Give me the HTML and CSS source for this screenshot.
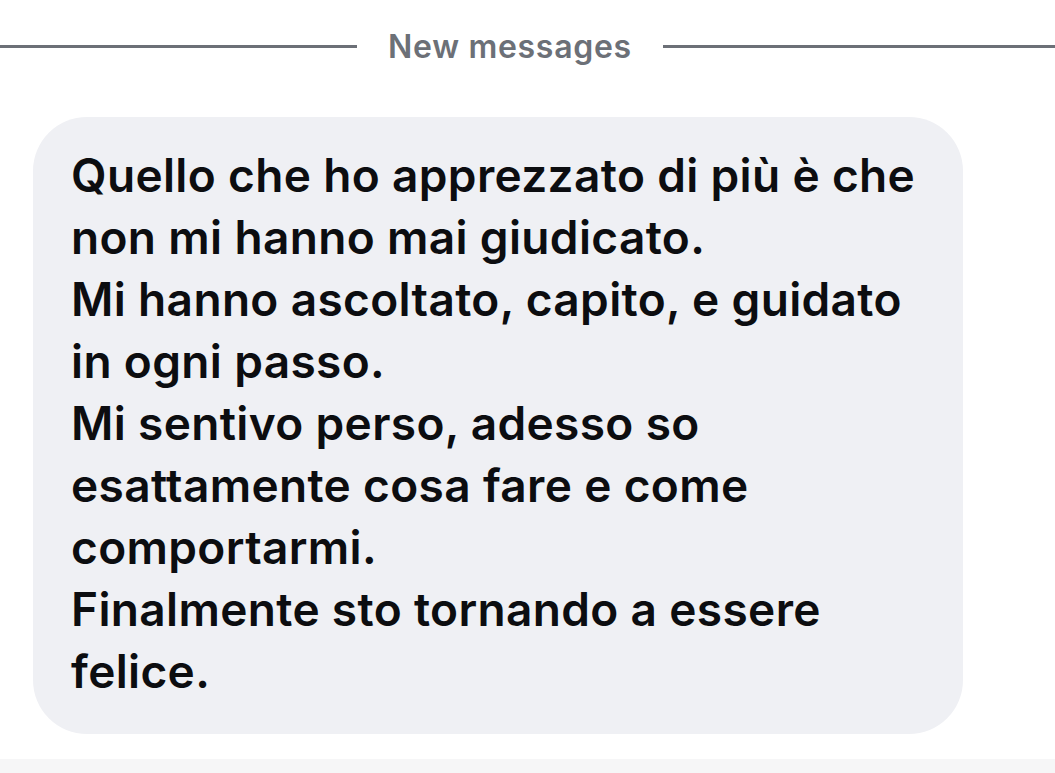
FILE: index.html
```html
<!DOCTYPE html>
<html lang="it">
<head>
<meta charset="utf-8">
<title>Messages</title>
<link rel="stylesheet" href="styles.css">
</head>
<body>
<div class="screen">
  <div class="divider">
    <span class="rule rule-left"></span>
    <span class="divider-label">New messages</span>
    <span class="rule rule-right"></span>
  </div>
  <div class="thread">
    <div class="bubble">
      <p class="msg">Quello che ho apprezzato di più è che<br>non mi hanno mai giudicato.</p>
      <p class="msg">Mi hanno ascoltato, capito, e guidato<br>in ogni passo.</p>
      <p class="msg">Mi sentivo perso, adesso so<br>esattamente cosa fare e come<br>comportarmi.</p>
      <p class="msg">Finalmente sto tornando a essere<br>felice.</p>
    </div>
  </div>
  <div class="composer-edge"></div>
</div>
</body>
</html>
```

FILE: styles.css
```css
html, body {
  margin: 0;
  padding: 0;
  background: #ffffff;
}

.screen {
  width: 1055px;
  height: 773px;
  display: flex;
  flex-direction: column;
  overflow: hidden;
  font-family: Inter, "Noto Sans", "Liberation Sans", sans-serif;
}

.divider {
  height: 93px;
  display: flex;
  align-items: center;
  gap: 31px;
}

.rule {
  height: 3px;
  background: #6c7077;
}

.rule-left {
  width: 357px;
}

.rule-right {
  flex: 1;
}

.divider-label {
  font-size: 32px;
  font-weight: 600;
  color: #6c7077;
  white-space: nowrap;
  line-height: 1;
  letter-spacing: 0.7px;
}

.thread {
  padding: 24px 0 0 33px;
}

.bubble {
  width: 930px;
  height: 617px;
  box-sizing: border-box;
  padding: 27px 20px 0 38px;
  background: #eff0f4;
  border-radius: 54px;
}

.msg {
  margin: 0;
  font-size: 46px;
  line-height: 62px;
  font-weight: 600;
  color: #0c0d10;
  white-space: nowrap;
  letter-spacing: 0.35px;
}

.composer-edge {
  margin-top: 25px;
  height: 14px;
  background: #f6f6f7;
}
```
